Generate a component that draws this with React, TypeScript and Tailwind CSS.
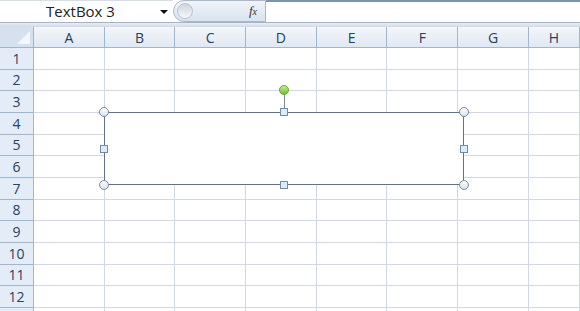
import React from 'react';

const COLS = ['A', 'B', 'C', 'D', 'E', 'F', 'G', 'H'];
const ROWS = Array.from({ length: 13 }, (_, i) => i + 1);

function Corner({ pos }: { pos: string }) {
  return (
    <div
      className={`absolute w-[10px] h-[10px] rounded-full border border-[#7d8a99] bg-gradient-to-b from-[#ffffff] to-[#d6e3f0] ${pos}`}
    />
  );
}

function Side({ pos }: { pos: string }) {
  return <div className={`absolute w-[8px] h-[8px] border border-[#6f8ca8] bg-[#dcebf8] ${pos}`} />;
}

function TextBoxSelection() {
  return (
    <div className="absolute left-[104px] top-[112px] h-[73px] w-[360px] border border-[#5e7387] bg-white">
      {/* rotation handle */}
      <div className="absolute left-1/2 -top-[19px] h-[19px] w-px bg-[#7d8a99]" />
      <div className="absolute left-1/2 -top-[28px] -ml-[5px] h-[10px] w-[10px] rounded-full border border-[#6aa23a] bg-gradient-to-b from-[#c3ef8a] to-[#6cc12f]" />
      <Corner pos="-left-[6px] -top-[6px]" />
      <Corner pos="-right-[6px] -top-[6px]" />
      <Corner pos="-left-[6px] -bottom-[6px]" />
      <Corner pos="-right-[6px] -bottom-[6px]" />
      <Side pos="left-1/2 -ml-[4px] -top-[5px]" />
      <Side pos="left-1/2 -ml-[4px] -bottom-[5px]" />
      <Side pos="top-1/2 -mt-[4px] -left-[5px]" />
      <Side pos="top-1/2 -mt-[4px] -right-[5px]" />
    </div>
  );
}

export default function App() {
  return (
    <div className="relative w-[580px] h-[311px] overflow-hidden bg-white font-['Open_Sans',sans-serif] text-[#1f3a5c]">
      {/* Formula bar */}
      <div className="flex h-[23px] border-b border-[#a3b4c8] bg-white">
        <div className="flex w-[173px] items-center border-t border-[#d7dde5] pl-[46px] pr-[5px] text-[15px] text-[#222] leading-none">
          TextBox 3
          <span className="ml-auto h-0 w-0 border-x-[4px] border-t-[4px] border-x-transparent border-t-[#111]" />
        </div>
        <div className="flex w-[93px] items-center rounded-l-full border border-[#a9b8cb] bg-gradient-to-b from-[#f1f5fa] to-[#d8e2ee] pl-[3px] pr-[8px]">
          <div className="h-[16px] w-[16px] rounded-full border border-[#b9c4d1] bg-gradient-to-b from-[#cfd5dc] to-[#f7f9fb]" />
          <span className="ml-auto font-['Liberation_Serif',serif] text-[13px] italic text-[#333]">
            f<span className="text-[10px]">x</span>
          </span>
        </div>
        <div className="flex-1 border-t-2 border-[#7f93aa] bg-white" />
      </div>
      <div className="h-[4px] bg-gradient-to-b from-[#e9eef5] to-[#cfd9e6]" />

      {/* Grid */}
      <div className="grid grid-cols-[34px_repeat(7,70.7px)_1fr] grid-rows-[21px_repeat(13,21.67px)]">
        <div className="flex items-end justify-end border-r border-b border-[#9eb6ce] bg-[#d5e1ef] p-[3px]">
          <span className="h-0 w-0 border-l-[13px] border-b-[13px] border-l-transparent border-b-[#f4f7fb]" />
        </div>
        {COLS.map((c) => (
          <div
            key={c}
            className="flex items-center justify-center border-r border-b border-[#9eb6ce] bg-gradient-to-b from-[#f3f6fa] to-[#e1e8f1] text-[14px] text-[#27415f]"
          >
            {c}
          </div>
        ))}
        {ROWS.map((r) => (
          <React.Fragment key={r}>
            <div className="flex items-center justify-center border-r border-b border-[#9eb6ce] bg-[#e4ecf7] text-[14px] text-[#27415f]">
              {r < 13 ? r : ''}
            </div>
            {COLS.map((c) => (
              <div key={c} className="border-r border-b border-[#d0d7e5]" />
            ))}
          </React.Fragment>
        ))}
      </div>

      <TextBoxSelection />
    </div>
  );
}
